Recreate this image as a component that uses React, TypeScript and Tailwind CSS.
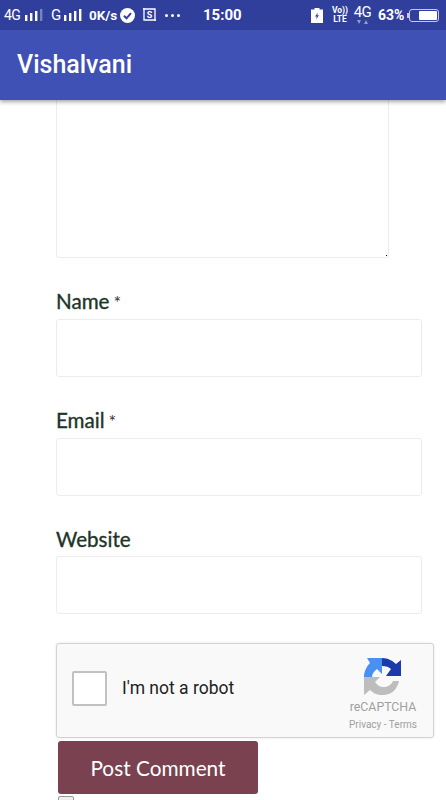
function SignalBars({ dim = false }: { dim?: boolean }) {
  return (
    <svg width="18" height="12" viewBox="0 0 18 12" fill="#fff">
      <rect x="0" y="6" width="2.4" height="6" />
      <rect x="5" y="4" width="2.4" height="8" />
      <rect x="10" y="2" width="2.4" height="10" />
      <rect x="15" y="0" width="2.4" height="12" opacity={dim ? 0.35 : 1} />
    </svg>
  );
}

function StatusBar() {
  return (
    <div className="flex h-[30px] items-center bg-[#303f9c] font-['Roboto',sans-serif] text-[14px] font-medium text-white">
      <span className="ml-1 w-[21px] text-[14px] font-normal tracking-[-0.5px]">4G</span>
      <SignalBars dim />
      <span className="ml-2 w-[13px] text-[15px] font-normal">G</span>
      <SignalBars />
      <span className="ml-[7px] w-[31px] text-[13.5px] font-bold">0K/s</span>
      <svg width="15" height="15" viewBox="0 0 15 15">
        <circle cx="7.5" cy="7.5" r="7.5" fill="#fff" />
        <path d="M4 7.8l2.5 2.5L11 5.2" fill="none" stroke="#303f9c" strokeWidth="2" />
      </svg>
      <svg className="ml-[7px]" width="16" height="16" viewBox="0 0 16 16" fill="none">
        <path d="M2 1v12h12M1 2h12v12" stroke="#fff" strokeWidth="1.3" />
        <text x="7.5" y="11" fontSize="9" fontWeight="700" fill="#fff" textAnchor="middle" fontFamily="Roboto, sans-serif">
          S
        </text>
      </svg>
      <div className="ml-[7px] flex w-[15px] justify-between">
        <span className="size-[3px] rounded-full bg-white" />
        <span className="size-[3px] rounded-full bg-white" />
        <span className="size-[3px] rounded-full bg-white" />
      </div>
      <span className="ml-[23px] w-[38px] text-[15px] font-bold">15:00</span>
      <svg className="ml-[70px]" width="12" height="15" viewBox="0 0 12 15">
        <path d="M3.5 0h5v1.5H12V15H0V1.5h3.5z" fill="#fff" />
        <path d="M6.8 4.5L4 8.5h1.8L5 11.5l3-4.2H6.2z" fill="#303f9c" />
      </svg>
      <div className="ml-[10px] flex w-[14px] flex-col items-center text-[8.5px] font-bold leading-[9px]">
        <span>Vo))</span>
        <span>LTE</span>
      </div>
      <div className="ml-[6px] flex h-[20px] w-[19px] flex-col items-center">
        <span className="h-[15px] text-[15px] font-normal leading-[15px] tracking-[-0.5px]">4G</span>
        <svg width="11" height="4" viewBox="0 0 11 4" fill="#8f9ad0">
          <path d="M0 0h4L2 4zM7 4l2-4 2 4z" />
        </svg>
      </div>
      <span className="ml-[6px] w-[26px] text-[14px] font-bold">63%</span>
      <div className="ml-[3px] h-[5px] w-[2px] bg-[#c5cae9]" />
      <div className="flex h-[13px] w-[30px] items-center justify-end rounded-[3px] border border-[#c5cae9] p-[1px]">
        <div className="h-full w-[18px] rounded-[1px] bg-white" />
      </div>
    </div>
  );
}

function Field({ label, required }: { label: string; required?: boolean }) {
  return (
    <div>
      <div className="font-['Lato',sans-serif] text-[20.6px] leading-[24px] text-[#1c3528] [-webkit-text-stroke:0.35px_#1c3528]">
        {label}
        {required ? <span className="ml-1 text-[18px] text-[#333] [-webkit-text-stroke:0]">*</span> : null}
      </div>
      <div className="mt-[5px] h-[58px] w-[366px] rounded-[3px] border border-[#ececec] bg-white" />
    </div>
  );
}

function RecaptchaLogo() {
  return (
    <svg width="38" height="38" viewBox="0 0 38 38">
      <path d="M0 19C0 13 3 8 6 5L3 0H18V16L13 11C10 13 8 16 8 19Z" fill="#4a90f2" />
      <path d="M18 0C24 0 29 3 32 6L37 2V18H22L27 11C25 9 22 8 18 8Z" fill="#1c3aa9" />
      <path d="M0 19H16L11 24C13 27 16 29 19 29C24 29 27 27 29 23H35C33 32 27 37 19 37C13 37 9 35 6 32L0 37Z" fill="#bdbdbd" />
    </svg>
  );
}

function Recaptcha() {
  return (
    <div className="flex h-[95px] w-[378px] rounded-[3px] border border-[#d3d3d3] bg-[#f9f9f9] shadow-[0_0_3px_rgba(0,0,0,0.1)]">
      <div className="ml-[15px] mt-[27px] size-[35px] rounded-[2px] border-2 border-[#c1c1c1] bg-white" />
      <span className="ml-[15px] mt-[34px] font-['Roboto',sans-serif] text-[17.5px] leading-[20px] text-[#222]">
        I'm not a robot
      </span>
      <div className="ml-auto mr-[15px] flex w-[70px] flex-col items-center pt-[14px] font-['Roboto',sans-serif]">
        <RecaptchaLogo />
        <span className="mt-[3px] text-[12.3px] leading-[16px] text-[#a0a0a0]">reCAPTCHA</span>
        <span className="mt-[3px] whitespace-nowrap text-[10px] leading-[14px] text-[#a0a0a0]">Privacy - Terms</span>
      </div>
    </div>
  );
}

export default function App() {
  return (
    <div className="h-[800px] w-[446px] overflow-hidden bg-white">
      <div className="relative z-10 shadow-[0_2px_4px_rgba(0,0,0,0.35)]">
        <StatusBar />
        <div className="flex h-[70px] items-center bg-[#3f51b5] pl-[17px] font-['Roboto',sans-serif] text-[25px] font-medium text-white">
          Vishalvani
        </div>
      </div>

      <div className="pl-[56px]">
        <div className="relative h-[158px] w-[333px] rounded-b-[3px] border-x border-b border-[#ececec]">
          <span className="absolute bottom-[1px] right-[1px] size-[1px] bg-black" />
        </div>
        <div className="mt-[31px] flex flex-col gap-[31px]">
          <Field label="Name" required />
          <Field label="Email" required />
          <Field label="Website" />
        </div>
        <div className="mt-[29px]">
          <Recaptcha />
        </div>
        <button
          className="ml-[2px] mt-[3px] block h-[53px] w-[200px] rounded-[3px] bg-[#7a4251] font-['Lato',sans-serif] text-[20.8px] text-white"
          type="button"
        >
          Post Comment
        </button>
        <div className="ml-[2px] mt-[2px] size-[16px] rounded-[2px] border border-[#999] bg-[#efefef]" />
      </div>
    </div>
  );
}
